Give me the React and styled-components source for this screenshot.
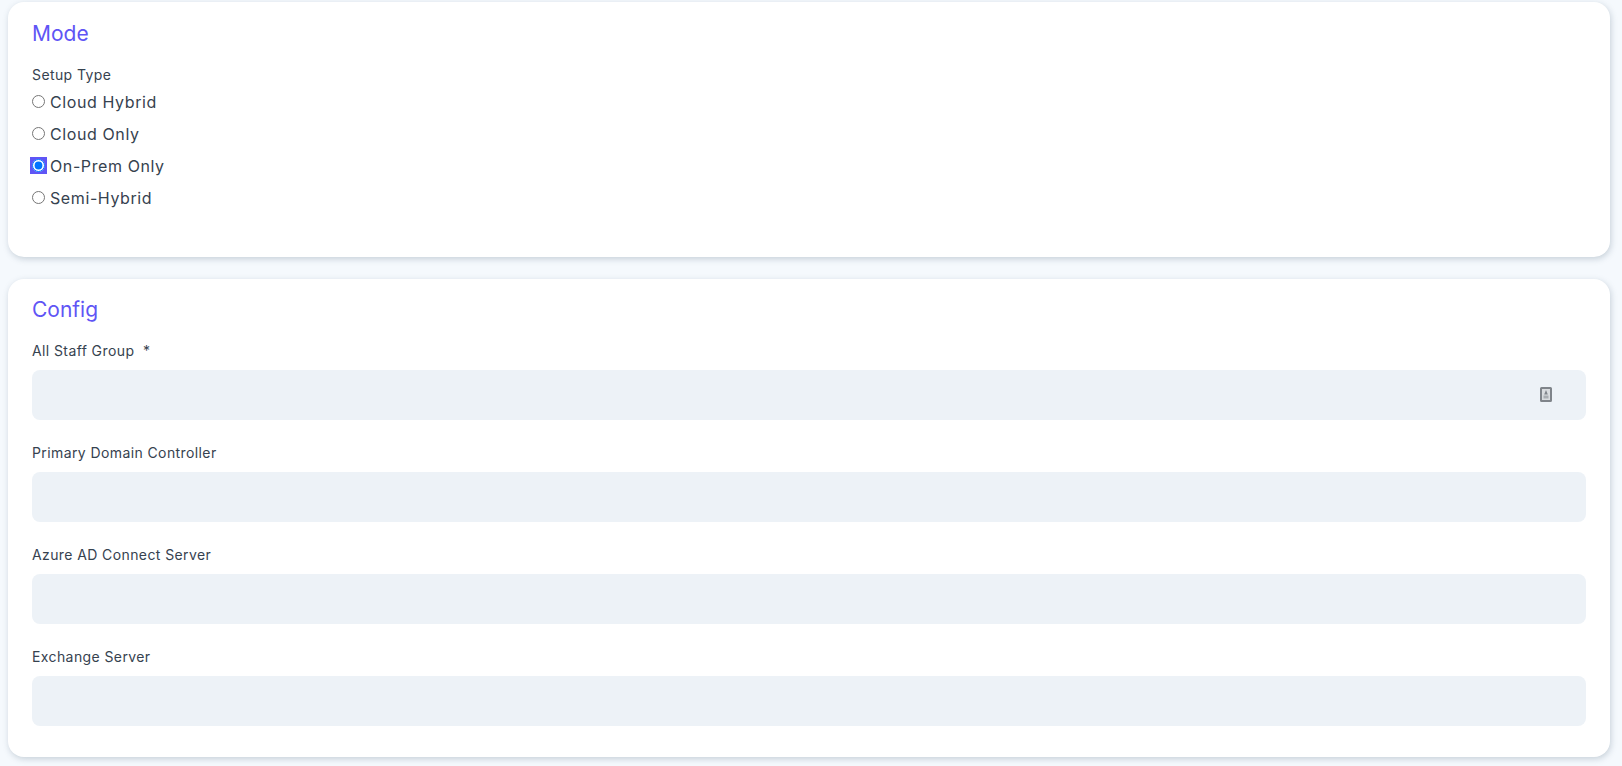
import React from 'react';
import styled, { createGlobalStyle } from 'styled-components';

const GlobalStyle = createGlobalStyle`
  html, body {
    margin: 0;
    padding: 0;
    background: #f5f9fd;
    font-family: Inter, "Noto Sans", sans-serif;
  }
`;

const Page = styled.div`
  display: flex;
  flex-direction: column;
  gap: 22px;
  padding: 2px 12px 9px 8px;
  height: 766px;
  box-sizing: border-box;
`;

const Card = styled.section`
  background: #fff;
  border-radius: 16px;
  box-shadow: 1px 2px 6px rgba(100, 120, 140, 0.32);
  padding: ${(p) => p.$pad};
  height: ${(p) => p.$height}px;
  box-sizing: border-box;
`;

const Title = styled.h2`
  margin: 0;
  font-size: 21px;
  line-height: 30px;
  font-weight: 400;
  color: #5f55f5;
`;

const SetupLabel = styled.div`
  margin-top: 16px;
  font-size: 14px;
  line-height: 20px;
  letter-spacing: 0.4px;
  color: #36424f;
`;

const RadioList = styled.div`
  display: flex;
  flex-direction: column;
`;

const RadioRow = styled.label`
  display: flex;
  align-items: center;
  height: 32px;
  font-size: 16px;
  letter-spacing: 0.6px;
  color: #36424f;
`;

const RadioText = styled.span`
  padding-top: 2px;
`;

const RadioFrame = styled.span`
  display: flex;
  width: 13px;
  height: 13px;
  margin-right: 5px;
  background: ${(p) => (p.$active ? '#5f55f5' : 'transparent')};
  outline: ${(p) => (p.$active ? '2px solid #5f55f5' : 'none')};
`;

const Radio = styled.input`
  width: 13px;
  height: 13px;
  margin: 0;
`;

const Field = styled.div`
  margin-top: ${(p) => p.$top}px;
`;

const FieldLabel = styled.div`
  font-size: 14px;
  line-height: 20px;
  letter-spacing: 0.4px;
  color: #36424f;
`;

const InputBox = styled.div`
  position: relative;
  margin-top: 9px;
  height: 50px;
  background: #edf2f7;
  border-radius: 8px;
`;

const ContactIcon = styled.svg`
  position: absolute;
  right: 34px;
  top: 17px;
`;

const types = ['Cloud Hybrid', 'Cloud Only', 'On-Prem Only', 'Semi-Hybrid'];
const fields = ['Primary Domain Controller', 'Azure AD Connect Server', 'Exchange Server'];

export default function App() {
  return (
    <Page>
      <GlobalStyle />
      <Card $pad="17px 24px" $height={255}>
        <Title>Mode</Title>
        <SetupLabel>Setup Type</SetupLabel>
        <RadioList>
          {types.map((t) => (
            <RadioRow key={t}>
              <RadioFrame $active={t === 'On-Prem Only'}>
                <Radio type="radio" name="setup" checked={t === 'On-Prem Only'} readOnly />
              </RadioFrame>
              <RadioText>{t}</RadioText>
            </RadioRow>
          ))}
        </RadioList>
      </Card>
      <Card $pad="16px 24px" $height={478}>
        <Title>Config</Title>
        <Field $top={16}>
          <FieldLabel>All Staff Group&nbsp; *</FieldLabel>
          <InputBox>
            <ContactIcon width="12" height="15" viewBox="0 0 12 15" fill="none">
              <rect x="1" y="1" width="10" height="13" rx="0.5" fill="#d9dcdf" stroke="#7f848a" strokeWidth="2" />
              <path d="M6 3 L7.8 7.5 H4.2 Z" fill="#7f848a" />
              <rect x="3.5" y="8.5" width="5" height="3" fill="#a9adb2" />
            </ContactIcon>
          </InputBox>
        </Field>
        {fields.map((f) => (
          <Field $top={23} key={f}>
            <FieldLabel>{f}</FieldLabel>
            <InputBox />
          </Field>
        ))}
      </Card>
    </Page>
  );
}
